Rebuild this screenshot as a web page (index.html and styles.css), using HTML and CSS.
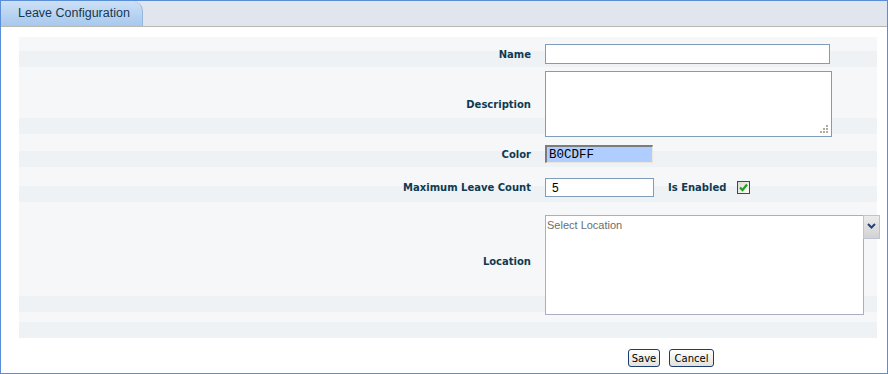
FILE: index.html
```html
<!DOCTYPE html>
<html lang="en">
<head>
  <meta charset="UTF-8" />
  <title>Leave Configuration</title>
  <link rel="stylesheet" href="styles.css">
</head>
<body>
  <div class="panel">
    <div class="panel-head">
      <div class="tab">Leave Configuration</div>
    </div>

    <div class="form">
      <div class="row row-name">
        <label class="lbl">Name</label>
        <div class="field"><input type="text" class="txt txt-name" /></div>
      </div>

      <div class="row row-desc">
        <label class="lbl">Description</label>
        <div class="field">
          <div class="area-wrap">
            <textarea class="area"></textarea>
            <svg class="grip" width="9" height="9" viewBox="0 0 9 9">
              <rect x="6" y="0" width="2" height="2" fill="#b3ad98" />
              <rect x="3" y="3" width="2" height="2" fill="#b3ad98" />
              <rect x="6" y="3" width="2" height="2" fill="#b3ad98" />
              <rect x="0" y="6" width="2" height="2" fill="#b3ad98" />
              <rect x="3" y="6" width="2" height="2" fill="#b3ad98" />
              <rect x="6" y="6" width="2" height="2" fill="#b3ad98" />
            </svg>
          </div>
        </div>
      </div>

      <div class="row row-color">
        <label class="lbl">Color</label>
        <div class="field"><input type="text" class="color-box" value="B0CDFF" /></div>
      </div>

      <div class="row row-max">
        <label class="lbl">Maximum Leave Count</label>
        <div class="field inline">
          <input type="text" class="txt txt-count" value="5" />
          <span class="lbl lbl-inline">Is Enabled</span>
          <span class="check">
            <svg width="11" height="11" viewBox="0 0 11 11">
              <path d="M2 5.5 L4.5 8 L9 2.5" fill="none" stroke="#21a121" stroke-width="2.2" />
            </svg>
          </span>
        </div>
      </div>

      <div class="row row-loc">
        <label class="lbl">Location</label>
        <div class="field inline-top">
          <div class="listbox">Select Location</div>
          <div class="dd-btn">
            <svg width="9" height="6" viewBox="0 0 9 6">
              <path d="M1 1 L4.5 4.5 L8 1" fill="none" stroke="#23427b" stroke-width="2" />
            </svg>
          </div>
        </div>
      </div>

      <div class="row row-empty"></div>
    </div>

    <div class="actions">
      <button class="btn btn-save">Save</button>
      <button class="btn btn-cancel">Cancel</button>
    </div>
  </div>
</body>
</html>
```

FILE: styles.css
```css
:root {
  --frame: #5a8fd7;
  --label: #0f3a52;
  --band-light: #f5f7f9;
  --band-dark: #eef2f5;
  --input-border: #7f9db9;
}

* {
  box-sizing: border-box;
}

body {
  margin: 0;
  font-family: "DejaVu Sans", Verdana, sans-serif;
  background: #fff;
}

.panel {
  width: 888px;
  height: 374px;
  border: 1px solid var(--frame);
  background: #fff;
}

.panel-head {
  height: 26px;
  background: #e1e6ee;
  border-bottom: 1px solid #b5b9af;
  display: flex;
}

.tab {
  width: 142px;
  height: 25px;
  padding-left: 17px;
  line-height: 25px;
  font-family: "Liberation Sans", Arial, sans-serif;
  font-size: 12.5px;
  color: #17384f;
  background: linear-gradient(#cde0f6, #a7c8ee);
  border-right: 1px solid #95b6df;
  border-top-right-radius: 10px;
}

.form {
  margin: 10px 10px 0 18px;
}

.row {
  display: grid;
  grid-template-columns: 512px 1fr;
  column-gap: 14px;
  align-items: center;
  align-content: start;
  background: linear-gradient(to bottom, var(--band-light) calc(100% - 16px), var(--band-dark) calc(100% - 16px));
}

.row-name { height: 30px; padding-top: 7px; }
.row-desc { height: 67px; padding-top: 4px; }
.row-color { height: 33px; padding-top: 11px; }
.row-max { height: 35px; padding-top: 11px; }
.row-loc { height: 110px; padding-top: 13px; }
.row-empty { height: 26px; }

.lbl {
  text-align: right;
  font-size: 10px;
  font-weight: bold;
  color: var(--label);
}

.row-loc .lbl {
  margin-top: -8px;
}

.field {
  display: flex;
}

.inline {
  align-items: center;
}

.inline-top {
  align-items: flex-start;
}

.txt {
  height: 19px;
  border: 1px solid var(--input-border);
  padding: 0 6px;
  font-family: "Liberation Sans", Arial, sans-serif;
  font-size: 12px;
  color: #000;
  background: #fff;
  outline: none;
}

.txt-name {
  width: 285px;
  height: 20px;
}

.txt-count {
  width: 109px;
}

.area-wrap {
  position: relative;
  width: 287px;
  height: 66px;
}

.area {
  display: block;
  width: 287px;
  height: 66px;
  border: 1px solid var(--input-border);
  resize: none;
  outline: none;
  background: #fff;
}

.grip {
  position: absolute;
  right: 3px;
  bottom: 3px;
}

.color-box {
  width: 108px;
  height: 18px;
  padding: 0 0 0 2px;
  border-style: solid;
  border-width: 2px 1px 1px 2px;
  border-color: #7c7c7c #e9e7de #e9e7de #7c7c7c;
  background: #b0cdff;
  font-family: "Liberation Mono", "Courier New", monospace;
  font-size: 12.5px;
  color: #000;
  outline: none;
}

.lbl-inline {
  margin-left: 14px;
}

.check {
  width: 13px;
  height: 13px;
  margin-left: 11px;
  border: 1px solid #1c5180;
  background: linear-gradient(135deg, #dcdcd6, #fbfbf9);
  display: flex;
  align-items: center;
  justify-content: center;
}

.listbox {
  width: 319px;
  height: 100px;
  border: 1px solid #a9aec2;
  background: #fff;
  padding: 3px 0 0 1px;
  font-family: "Liberation Sans", Arial, sans-serif;
  font-size: 11px;
  color: #6d6d6d;
}

.dd-btn {
  width: 17px;
  height: 24px;
  margin-left: -1px;
  border: 1px solid #bfc3d2;
  background: linear-gradient(#ececec, #d2d2d2);
  display: flex;
  justify-content: center;
  padding-top: 7px;
}

.actions {
  display: flex;
  gap: 9px;
  padding-left: 627px;
  margin-top: 11px;
}

.btn {
  height: 18px;
  padding: 0;
  border: 1px solid #1d3d72;
  border-radius: 3px;
  background: linear-gradient(#ffffff, #e2e1da);
  font-family: "DejaVu Sans", Verdana, sans-serif;
  font-size: 10px;
  color: #000;
}

.btn-save {
  width: 32px;
}

.btn-cancel {
  width: 45px;
}
```
